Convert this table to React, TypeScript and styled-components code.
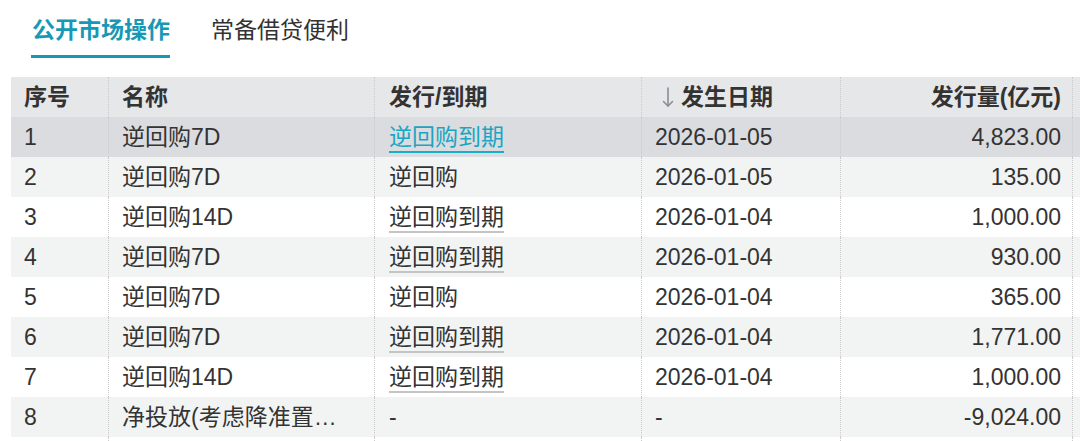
import React from "react";
import styled, { createGlobalStyle } from "styled-components";

const GlobalStyle = createGlobalStyle`
  html, body {
    margin: 0;
    padding: 0;
    background: #ffffff;
    overflow: hidden;
  }
  body {
    font-family: "Liberation Sans", "Noto Sans CJK SC", sans-serif;
    color: #333333;
  }
`;

const Page = styled.div`
  width: 1080px;
  height: 441px;
  overflow: hidden;
`;

const Tabs = styled.div`
  display: flex;
  gap: 40px;
  padding: 14px 0 0 31px;
`;

const Tab = styled.div<{ $active?: boolean }>`
  font-size: 23px;
  line-height: 32px;
  padding: 0 0 9px 1px;
  border-bottom: 3px solid ${(p) => (p.$active ? "#1799b6" : "transparent")};
  color: ${(p) => (p.$active ? "#1799b6" : "#333333")};
  font-weight: ${(p) => (p.$active ? 700 : 400)};
  cursor: pointer;
`;

const Table = styled.div`
  margin: 19px 0 0 11px;
  display: flex;
  flex-direction: column;
`;

const Row = styled.div<{ $variant: "head" | "hover" | "even" | "odd" }>`
  display: grid;
  grid-template-columns: 98px 266px 267px 199px 232px 1fr;
  height: 40px;
  background: ${(p) =>
    p.$variant === "head"
      ? "#e6e7e9"
      : p.$variant === "hover"
      ? "#dbdcdf"
      : p.$variant === "even"
      ? "#f2f3f3"
      : "#ffffff"};
`;

const Cell = styled.div<{ $align?: "left" | "right"; $head?: boolean }>`
  box-sizing: border-box;
  display: flex;
  align-items: center;
  justify-content: ${(p) => (p.$align === "right" ? "flex-end" : "flex-start")};
  padding: ${(p) => (p.$align === "right" ? "0 11px 0 0" : "0 0 0 13px")};
  border-right: 1px dotted #cbcbcb;
  font-size: 23px;
  line-height: 28px;
  font-weight: ${(p) => (p.$head ? 700 : 400)};
  color: #333333;
  white-space: nowrap;
  overflow: hidden;
`;

const LastCell = styled.div`
  box-sizing: border-box;
`;

const SortIcon = styled.svg`
  width: 12px;
  height: 22px;
  margin: 0 7px 0 7px;
  flex: none;
`;

const Link = styled.span<{ $active?: boolean }>`
  display: inline-block;
  line-height: 28px;
  margin: 2px 0 0 1px;
  border-bottom: 2px solid ${(p) => (p.$active ? "#17aecb" : "#c4c4c4")};
  color: ${(p) => (p.$active ? "#1aa5c2" : "#333333")};
  cursor: pointer;
`;

const TypeText = styled.span`
  margin-left: 1px;
`;

type Item = {
  no: string;
  name: string;
  type: string;
  link: boolean;
  date: string;
  amount: string;
};

const rows: Item[] = [
  { no: "1", name: "逆回购7D", type: "逆回购到期", link: true, date: "2026-01-05", amount: "4,823.00" },
  { no: "2", name: "逆回购7D", type: "逆回购", link: false, date: "2026-01-05", amount: "135.00" },
  { no: "3", name: "逆回购14D", type: "逆回购到期", link: true, date: "2026-01-04", amount: "1,000.00" },
  { no: "4", name: "逆回购7D", type: "逆回购到期", link: true, date: "2026-01-04", amount: "930.00" },
  { no: "5", name: "逆回购7D", type: "逆回购", link: false, date: "2026-01-04", amount: "365.00" },
  { no: "6", name: "逆回购7D", type: "逆回购到期", link: true, date: "2026-01-04", amount: "1,771.00" },
  { no: "7", name: "逆回购14D", type: "逆回购到期", link: true, date: "2026-01-04", amount: "1,000.00" },
  { no: "8", name: "净投放(考虑降准置…", type: "-", link: false, date: "-", amount: "-9,024.00" },
];

export default function App() {
  return (
    <Page>
      <GlobalStyle />
      <Tabs>
        <Tab $active>公开市场操作</Tab>
        <Tab>常备借贷便利</Tab>
      </Tabs>
      <Table>
        <Row $variant="head">
          <Cell $head>序号</Cell>
          <Cell $head>名称</Cell>
          <Cell $head>
            <TypeText>发行/到期</TypeText>
          </Cell>
          <Cell $head>
            <SortIcon viewBox="0 0 12 22" fill="none" stroke="#8a8d92" strokeWidth="1.6" strokeLinecap="round" strokeLinejoin="round">
              <path d="M6 2 V20" />
              <path d="M1.5 15.5 L6 20 L10.5 15.5" />
            </SortIcon>
            发生日期
          </Cell>
          <Cell $head $align="right">
            发行量(亿元)
          </Cell>
          <LastCell />
        </Row>
        {rows.map((r, i) => (
          <Row key={r.no} $variant={i === 0 ? "hover" : i % 2 === 1 ? "even" : "odd"}>
            <Cell>{r.no}</Cell>
            <Cell>{r.name}</Cell>
            <Cell>
              {r.link ? (
                <Link $active={i === 0}>{r.type}</Link>
              ) : (
                <TypeText>{r.type}</TypeText>
              )}
            </Cell>
            <Cell>{r.date}</Cell>
            <Cell $align="right">{r.amount}</Cell>
            <LastCell />
          </Row>
        ))}
        <Row $variant="odd">
          <Cell />
          <Cell />
          <Cell />
          <Cell />
          <Cell />
          <LastCell />
        </Row>
      </Table>
    </Page>
  );
}
